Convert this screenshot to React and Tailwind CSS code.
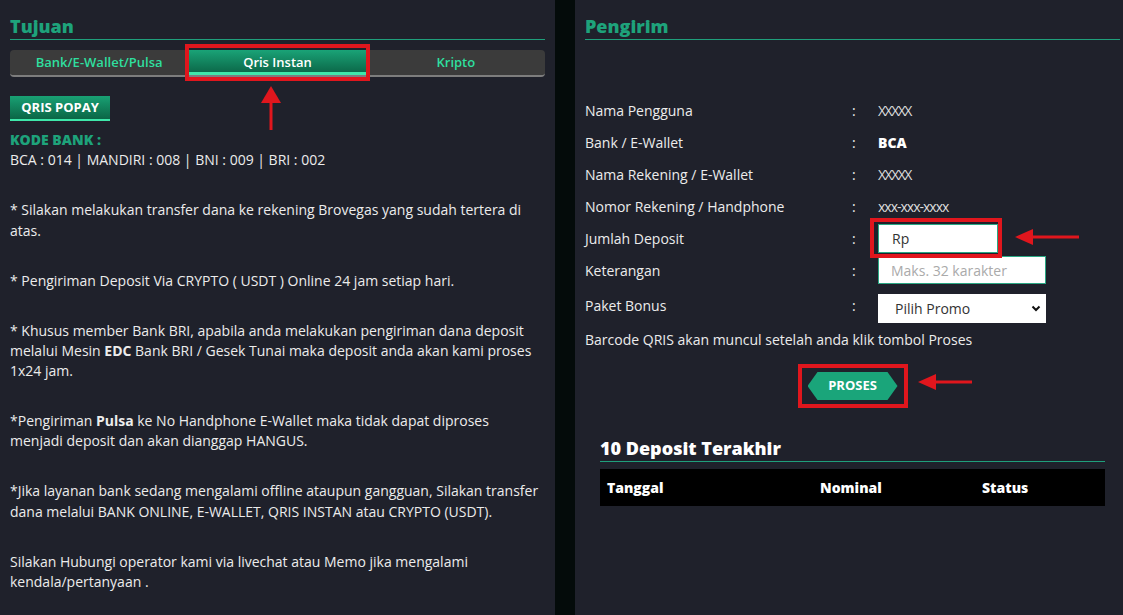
const notes = [
  ['* Silakan melakukan transfer dana ke rekening Brovegas yang sudah tertera di atas.'],
  ['* Pengiriman Deposit Via CRYPTO ( USDT ) Online 24 jam setiap hari.'],
];

const RedBox = ({ className }) => (
  <span className={`pointer-events-none absolute border-[4px] border-[#e0161d] ${className}`} />
);

const Field = ({ label, children, h = 'h-[32px]' }) => (
  <div className={`flex items-center ${h}`}>
    <div className="w-[267px] shrink-0">{label}</div>
    <div className="w-[26px] shrink-0">:</div>
    <div className="flex-1">{children}</div>
  </div>
);

const App = () => {
  return (
    <div className="flex h-[615px] w-[1123px] overflow-hidden bg-[#1f212b] font-['Open_Sans',sans-serif] text-[14px] text-[#ececec]">
      {/* Tujuan */}
      <div className="relative w-[555px] shrink-0 px-[10px]">
        <h2 className="border-b border-[#1f9f7b] pt-[14px] text-[18px] font-extrabold leading-[25px] text-[#1ea37b]">
          Tujuan
        </h2>

        <div className="mt-[10px] flex h-[27px] rounded-[4px] border-b-2 border-[#7d7d7d] bg-[#3b3b3b] text-[13px] font-semibold">
          <div className="flex flex-1 items-center justify-center text-[#2fdf9f]">Bank/E-Wallet/Pulsa</div>
          <div className="relative flex flex-1 items-center justify-center border-b-[3px] border-[#3fe7aa] bg-gradient-to-b from-[#1aa377] to-[#0c6a4a] pt-[3px] text-white">
            Qris Instan
            <RedBox className="-top-[6px] -bottom-[9px] -left-[3px] -right-[3px]" />
          </div>
          <div className="flex flex-1 items-center justify-center text-[#2fdf9f]">Kripto</div>
        </div>

        <svg className="absolute left-[259px] top-[84px]" width="24" height="48" viewBox="0 0 24 48">
          <polygon points="12,2 22,19 2,19" fill="#e0161d" />
          <rect x="10.5" y="18" width="3" height="28" fill="#e0161d" />
        </svg>

        <button className="mt-[19px] block h-[25px] w-[100px] border-b-2 border-[#3fe7aa] bg-gradient-to-b from-[#19a174] to-[#0b6646] text-[13px] font-bold text-white">
          QRIS POPAY
        </button>

        <div className="mt-[9px] leading-[20.3px]">
          <div className="font-extrabold text-[#1ea37b]">KODE BANK :</div>
          <div>BCA : 014 | MANDIRI : 008 | BNI : 009 | BRI : 002</div>

          {notes.map(([t]) => (
            <p key={t} className="mt-[29.7px] pr-[10px]">{t}</p>
          ))}
          <p className="mt-[29.7px]">
            * Khusus member Bank BRI, apabila anda melakukan pengiriman dana deposit melalui Mesin <b>EDC</b> Bank BRI / Gesek Tunai maka deposit anda akan kami proses 1x24 jam.
          </p>
          <p className="mt-[29.7px] pr-[20px]">
            *Pengiriman <b>Pulsa</b> ke No Handphone E-Wallet maka tidak dapat diproses menjadi deposit dan akan dianggap HANGUS.
          </p>
          <p className="mt-[29.7px]">
            *Jika layanan bank sedang mengalami offline ataupun gangguan, Silakan transfer dana melalui BANK ONLINE, E-WALLET, QRIS INSTAN atau CRYPTO (USDT).
          </p>
          <p className="mt-[29.7px] pr-[20px]">
            Silakan Hubungi operator kami via livechat atau Memo jika mengalami kendala/pertanyaan .
          </p>
        </div>
      </div>

      <div className="w-[20px] shrink-0 bg-[#040b0a]" />

      {/* Pengirim */}
      <div className="relative flex-1 pl-[10px] pr-[3px]">
        <h2 className="border-b border-[#1f9f7b] pt-[14px] text-[18px] font-extrabold leading-[25px] text-[#1ea37b]">
          Pengirim
        </h2>

        <div className="mt-[54px]">
          <Field label="Nama Pengguna"><span className="text-[14px] tracking-[-1.5px] text-[#dcdcdc]">XXXXX</span></Field>
          <Field label="Bank / E-Wallet"><span className="font-extrabold text-white">BCA</span></Field>
          <Field label="Nama Rekening / E-Wallet"><span className="text-[14px] tracking-[-1.5px] text-[#dcdcdc]">XXXXX</span></Field>
          <Field label="Nomor Rekening / Handphone"><span className="text-[14px] tracking-[-1px] text-[#dcdcdc]">xxx-xxx-xxxx</span></Field>
          <Field label="Jumlah Deposit">
            <div className="relative w-[120px]">
              <div className="flex h-[29px] items-center border border-[#2aa884] bg-white pl-[13px] text-[#333]">Rp</div>
              <RedBox className="-top-[6px] -bottom-[5px] -left-[8px] -right-[4px]" />
              <svg className="absolute left-[135px] top-[3px]" width="68" height="20" viewBox="0 0 68 20">
                <polygon points="2,10 20,2 20,18" fill="#e0161d" />
                <rect x="18" y="8.5" width="48" height="3" fill="#e0161d" />
              </svg>
            </div>
          </Field>
          <Field label="Keterangan">
            <div className="flex h-[28px] w-[168px] items-center border border-[#2aa884] bg-white pl-[12px] text-[#aaaaaa]">
              Maks. 32 karakter
            </div>
          </Field>
          <Field label="Paket Bonus" h="h-[38px]">
            <div className="mt-[6px] flex h-[29px] w-[168px] items-center justify-between bg-white pl-[17px] pr-[4px] text-[#333]">
              Pilih Promo
              <svg width="12" height="12" viewBox="0 0 12 12">
                <path d="M2.5 4.5 L6 8 L9.5 4.5" fill="none" stroke="#111" strokeWidth="2" />
              </svg>
            </div>
          </Field>
          <div className="mt-[6px] leading-[20px]">Barcode QRIS akan muncul setelah anda klik tombol Proses</div>
        </div>

        <div className="mt-[22px] flex justify-center">
          <div className="relative">
            <button className="flex h-[28px] w-[90px] items-center justify-center bg-[#1aa57a] text-[13px] font-bold text-white [clip-path:polygon(10px_0,80px_0,90px_50%,80px_100%,10px_100%,0_50%)]">
              PROSES
            </button>
            <RedBox className="-top-[8px] -bottom-[8px] -left-[10px] -right-[10px]" />
            <svg className="absolute left-[108px] top-[0px]" width="58" height="20" viewBox="0 0 58 20">
              <polygon points="2,10 20,2 20,18" fill="#e0161d" />
              <rect x="18" y="8.5" width="38" height="3" fill="#e0161d" />
            </svg>
          </div>
        </div>

        <div className="mt-[35px] pl-[15px] pr-[15px]">
          <h3 className="border-b border-[#1f9f7b] text-[18px] font-extrabold leading-[26px] text-white">
            10 Deposit Terakhir
          </h3>
          <div className="mt-[7px] grid h-[37px] grid-cols-[213px_162px_1fr] items-center bg-black pl-[7px] font-extrabold text-white">
            <div>Tanggal</div>
            <div>Nominal</div>
            <div>Status</div>
          </div>
        </div>
      </div>
    </div>
  );
};

export default App;
